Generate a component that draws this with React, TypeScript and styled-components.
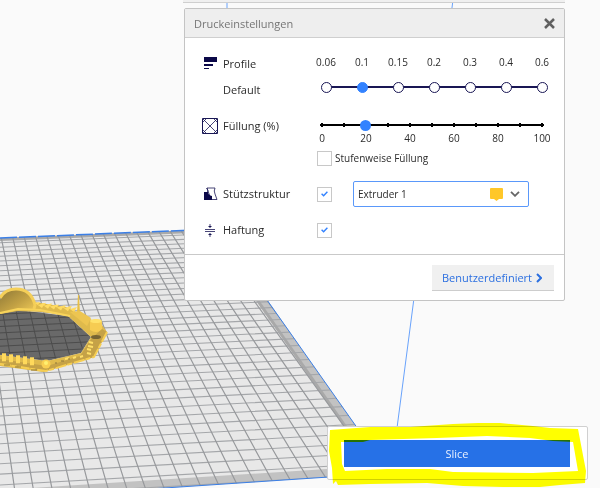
import React, { useState } from "react";
import styled, { createGlobalStyle } from "styled-components";

const GlobalStyle = createGlobalStyle`
  * { box-sizing: border-box; }
  body { margin: 0; background: #fafafa; }
  body, button, input, select {
    font-family: "Open Sans", "Noto Sans", sans-serif;
    font-size: 11px;
  }
`;

const ink = "#191654";
const blue = "#3282ff";

const Page = styled.main`
  position: relative;
  display: flex;
  flex-direction: column;
  align-items: flex-end;
  min-height: 100vh;
  overflow: hidden;
  color: #2b2b2b;
`;

const Backdrop = styled.svg`
  position: absolute;
  inset: 0;
  width: 100%;
  height: 100%;
`;

const SetupBar = styled.div`
  position: relative;
  width: min(100%, 382px);
  height: 3px;
  margin: 0 35px 5px 0;
  background: #f0f0f0;
  border-bottom: 1px solid #cfcfcf;
`;

const Panel = styled.section`
  position: relative;
  width: min(100%, 381px);
  margin-right: 35px;
  background: #fff;
  border: 1px solid #c4c4c4;
  border-radius: 2px;
`;

const PanelHeader = styled.header`
  display: flex;
  align-items: center;
  justify-content: space-between;
  height: 29px;
  padding: 0 9px;
  background: #eee;
  border-bottom: 1px solid #cfcfcf;
`;

const PanelTitle = styled.h1`
  margin: 0;
  font-size: 11px;
  font-weight: 400;
  color: #757575;
`;

const IconButton = styled.button`
  display: flex;
  padding: 0;
  border: 0;
  background: none;
  cursor: pointer;
`;

const PanelBody = styled.div`
  display: flex;
  flex-direction: column;
  gap: 10px;
  padding: 13px 12px 11px 17px;
`;

const Row = styled.div`
  display: grid;
  grid-template-columns: 21px 93px 1fr;
  align-items: start;
`;

const IconCell = styled.span`
  display: flex;
  align-items: center;
  height: 26px;
`;

const RowLabel = styled.div`
  line-height: 26px;
`;

const Stops = styled.div`
  position: relative;
  display: flex;
  justify-content: space-between;
  width: 236px;
  padding-top: 5px;
  &::before {
    content: "";
    position: absolute;
    left: 10px;
    right: 10px;
    bottom: 5px;
    height: 2px;
    background: ${ink};
  }
`;

const Stop = styled.label`
  position: relative;
  display: flex;
  flex-direction: column;
  align-items: center;
  gap: 14px;
  width: 20px;
  font-size: 10px;
  line-height: 12px;
`;

const StopRadio = styled.input`
  appearance: none;
  width: 11px;
  height: 11px;
  margin: 0;
  border: 1px solid ${ink};
  border-radius: 50%;
  background: #fff;
  &:checked {
    border-color: ${blue};
    background: ${blue};
  }
`;

const Infill = styled.div`
  display: flex;
  flex-direction: column;
  width: 232px;
  padding: 5px 0;
`;

const Range = styled.input`
  appearance: none;
  width: 100%;
  height: 14px;
  margin: 0;
  background: none;
  &::-webkit-slider-runnable-track {
    height: 14px;
    background:
      radial-gradient(circle, #000 2px, transparent 2px) -5px 0 / 22px 14px,
      linear-gradient(#000, #000) center / 220px 2px no-repeat;
  }
  &::-webkit-slider-thumb {
    appearance: none;
    width: 11px;
    height: 11px;
    margin-top: 2px;
    border-radius: 50%;
    background: ${blue};
  }
`;

const Scale = styled.div`
  display: flex;
  justify-content: space-between;
  margin: 0 -6px 7px;
  font-size: 10px;
  line-height: 12px;
  span {
    width: 24px;
    text-align: center;
  }
`;

const CheckLabel = styled.label`
  display: flex;
  align-items: center;
  gap: 3px;
  font-size: 10px;
  line-height: 15px;
`;

const CheckFrame = styled.span`
  display: grid;
  flex: none;
  width: 15px;
  height: 15px;
  margin-left: 1px;
  place-items: center;
  > * {
    grid-area: 1 / 1;
  }
  svg {
    pointer-events: none;
    visibility: hidden;
  }
  input:checked + svg {
    visibility: visible;
  }
`;

const CheckInput = styled.input`
  appearance: none;
  width: 15px;
  height: 15px;
  margin: 0;
  border: 1px solid #c8c8c8;
  background: #fff;
`;

const Controls = styled.div`
  display: flex;
  align-items: center;
  gap: 21px;
  height: 26px;
`;

const SelectFrame = styled.div`
  display: grid;
  width: 176px;
  align-items: center;
  > * {
    grid-area: 1 / 1;
  }
`;

const ExtruderSelect = styled.select`
  appearance: none;
  width: 100%;
  height: 26px;
  padding: 0 48px 0 4px;
  border: 1px solid #5a98fa;
  border-radius: 2px;
  background: #fff;
  color: #2b2b2b;
  font-size: 10px;
`;

const SelectIcons = styled.span`
  display: flex;
  align-items: center;
  gap: 7px;
  justify-self: end;
  margin-right: 9px;
  pointer-events: none;
`;

const PanelFooter = styled.footer`
  display: flex;
  justify-content: flex-end;
  padding: 10px 10px 9px;
  border-top: 1px solid #c9c9c9;
`;

const CustomButton = styled.button`
  display: flex;
  align-items: center;
  justify-content: space-between;
  min-width: 122px;
  height: 26px;
  padding: 0 12px 0 10px;
  border: 0;
  border-bottom: 1px solid #cdcdcd;
  background: #f0f0f0;
  color: #2b6fe0;
`;

const ActionCard = styled.section`
  position: relative;
  width: min(100%, 261px);
  margin: auto 12px 8px 0;
  padding: 13px 17px 12px 16px;
  background: #fff;
  border: 1px solid #d0d0d0;
  border-radius: 2px;
`;

const SliceButton = styled.button`
  display: block;
  width: 100%;
  height: 27px;
  padding: 0;
  border: 0;
  background: #2671e7;
  color: #e8f0ff;
`;

const Marker = styled.svg`
  position: absolute;
  left: -1px;
  top: -5px;
  width: 261px;
  height: 66px;
  mix-blend-mode: multiply;
  pointer-events: none;
`;

const columnPaths = Array.from({ length: 34 }, (_, i) => {
  const k = i - 4;
  const at = (y: number) => -80 + ((92 + 15.2 * k) * (y + 165)) / 531;
  return `M${at(225).toFixed(1)} 225L${at(500).toFixed(1)} 500`;
}).join("");

const rowPaths = Array.from({ length: 45 }, (_, i) => {
  const y = 1 / (0.0015385 + (i - 4) * 0.0000261) - 165;
  const slope = 0.042 + (y - 234) * 0.00006;
  return `M0 ${y.toFixed(1)}L420 ${(y - slope * 420).toFixed(1)}`;
}).join("");

const studs = [2, 9, 16, 23, 30];
const teeth = [38, 44, 50, 57, 64, 70];

function Scene() {
  return (
    <Backdrop viewBox="0 0 600 488" preserveAspectRatio="xMinYMin slice" aria-hidden="true">
      <defs>
        <clipPath id="plate">
          <path d="M0 238L217 229L389 473L0 499Z" />
        </clipPath>
        <clipPath id="opening">
          <path d="M0 314L18 311L68 316L90 337L80 352L47 360L0 354Z" />
        </clipPath>
        <linearGradient id="dome" x1="0" y1="0" x2="1" y2="1">
          <stop offset="0" stopColor="#8d7837" />
          <stop offset=".55" stopColor="#c2a144" />
          <stop offset="1" stopColor="#f2cc58" />
        </linearGradient>
      </defs>
      <g clipPath="url(#plate)">
        <path d="M0 225H420V500H0Z" fill="#c2c2c2" />
        <path d="M0 240L209 231L373 466L0 490Z" fill="#e8e8e8" />
        <path d="M0 239.500L217 230.500" stroke="#aaa" strokeWidth="3" />
        <path d="M209 231L373 466" stroke="#a9a9a9" strokeWidth="3" />
        <path d={rowPaths} stroke="#a5a7aa" strokeWidth="1.100" />
        <path d={columnPaths} stroke="#97999c" strokeWidth="1.200" />
      </g>
      <g fill="none" stroke="#3b7fe6">
        <path d="M0 238L217 229" strokeWidth="1.500" strokeDasharray="17 2" />
        <path d="M217 229L389 473L0 499" />
        <path d="M453 0L397 428M227 0V10" stroke="#68a2fb" />
      </g>
      <path d="M0 314L18 310L68 316L91 337L81 353L47 361L0 355Z" fill="#696969" />
      <g clipPath="url(#opening)" stroke="#4c4c4c">
        <path d={rowPaths} />
        <path d={columnPaths} />
      </g>
      <path d="M0 302H34L66 307L76 312L88 318L102 325L107 332L94 357L43 372L0 366Z M0 314V355L47 361L81 353L91 337L68 316L42 312L18 311Z" fill="#dfba4c" fillRule="evenodd" />
      <path d="M0 300Q4 289 16 289Q31 290 35 305L34 310L18 310L0 313Z" fill="url(#dome)" />
      <path d="M0 298Q5 289 16 289Q31 289 35 305L34 309" fill="none" stroke="#f5cf58" strokeWidth="3" />
      <path d="M0 313L18 309L40 310L70 316" fill="none" stroke="#f8d45b" strokeWidth="2" />
      {teeth.map((x) => (
        <path key={x} d={`M${x - 3} ${303 + (x - 38) / 8}l5 -1l-2 3l7 -2l-3 5z`} fill="#ffdb62" />
      ))}
      <path d="M78 295L77 314L80 314L79 295Z" fill="#e8bf45" />
      <path d="M70 312L80 311L91 318L87 326Z" fill="#edc551" />
      <path d="M90 322Q96 316 102 322V330Q96 334 90 330Z" fill="#f6cc52" />
      <ellipse cx="96" cy="321" rx="6" ry="2" fill="#ffe26b" />
      <path d="M102 329L107 332L94 357L46 371L0 363V359L47 366L80 356L92 338Z" fill="#c5a247" />
      <path d="M107 332L94 357L46 371L0 364" fill="none" stroke="#f6ce52" strokeWidth="2" strokeDasharray="11 2 5 1" />
      <ellipse cx="96" cy="337" rx="5" ry="2" fill="#766433" />
      <path d="M89 342l4 1m-5 3l5 1m-6 2l4 1m-4 3l4 1M65 359l4-1m4 0l3-1m4 0l3-1" stroke="#ffe06a" strokeWidth="2" />
      <path d="M55 363h2m4-2h3m4-2h2M4 365h6m5 2h6m10 3h6" stroke="#8d773b" />
      {studs.map((x) => (
        <path key={x} d={`M${x} ${353 + x / 7}h4v8h-4z`} fill="#ffd95b" />
      ))}
      <circle cx="46" cy="364" r="4.500" fill="#f9d052" />
      <circle cx="46" cy="363" r="2" fill="#fff070" />
    </Backdrop>
  );
}

const ProfileIcon = () => (
  <svg width="16" height="16" viewBox="0 0 16 16" fill="#0b0848" aria-hidden="true">
    <path d="M2 1h13v5H2zM2 8h9v2H2zM2 12h5v1H2z" />
  </svg>
);

const InfillIcon = () => (
  <svg width="16" height="16" viewBox="0 0 16 16" fill="none" stroke={ink} aria-hidden="true">
    <path d="M.5 .5h15v15H.5z" />
    <path d="M1 1l14 14M15 1L1 15M4 1L1 4M12 1l3 3M1 12l3 3M15 12l-3 3" strokeWidth=".8" />
  </svg>
);

const SupportIcon = () => (
  <svg width="16" height="16" viewBox="0 0 16 16" aria-hidden="true">
    <path d="M5 2h8q-1.500 3 0 6l2 5.500H9z" fill="#fff" stroke={ink} strokeWidth=".8" />
    <path d="M4.500 2q2 2 1 4.500" fill="none" stroke={ink} strokeWidth=".8" />
    <path d="M2 6h4q0 3 4 4v4H2z" fill="#0b0848" />
  </svg>
);

const AdhesionIcon = () => (
  <svg width="16" height="16" viewBox="0 0 16 16" fill="none" stroke={ink} aria-hidden="true">
    <path d="M3 7.500h10M3 9.500h10M8 2v3M8 12v3" strokeWidth=".8" />
    <path d="M6 4h4L8 6zM6 13h4L8 11z" fill={ink} stroke="none" />
  </svg>
);

const CheckMark = () => (
  <svg width="7" height="6" viewBox="0 0 7 6" fill="none" stroke={blue} strokeWidth="1.400" aria-hidden="true">
    <path d="M.6 2.800l2 2L6.400 .8" />
  </svg>
);

const profiles = ["0.06", "0.1", "0.15", "0.2", "0.3", "0.4", "0.6"];

export default function App() {
  const [profile, setProfile] = useState("0.1");
  const [infill, setInfill] = useState(20);

  return (
    <Page>
      <GlobalStyle />
      <Scene />
      <SetupBar />
      <Panel aria-labelledby="settings-title">
        <PanelHeader>
          <PanelTitle id="settings-title">Druckeinstellungen</PanelTitle>
          <IconButton type="button" aria-label="Schließen">
            <svg width="11" height="11" viewBox="0 0 11 11" stroke="#606060" strokeWidth="2.500" aria-hidden="true">
              <path d="M1 1l9 9M10 1l-9 9" />
            </svg>
          </IconButton>
        </PanelHeader>
        <PanelBody>
          <Row>
            <IconCell><ProfileIcon /></IconCell>
            <RowLabel>
              <div id="profile-label">Profile</div>
              <div>Default</div>
            </RowLabel>
            <Stops role="radiogroup" aria-labelledby="profile-label">
              {profiles.map((value) => (
                <Stop key={value}>
                  {value}
                  <StopRadio
                    type="radio"
                    name="profile"
                    value={value}
                    checked={profile === value}
                    onChange={() => setProfile(value)}
                  />
                </Stop>
              ))}
            </Stops>
          </Row>
          <Row>
            <IconCell><InfillIcon /></IconCell>
            <RowLabel as="label" htmlFor="infill">Füllung (%)</RowLabel>
            <Infill>
              <Range
                id="infill"
                type="range"
                min="0"
                max="100"
                value={infill}
                onChange={(event) => setInfill(Number(event.target.value))}
              />
              <Scale>
                {[0, 20, 40, 60, 80, 100].map((value) => <span key={value}>{value}</span>)}
              </Scale>
              <CheckLabel>
                <CheckFrame><CheckInput type="checkbox" /><CheckMark /></CheckFrame>
                Stufenweise Füllung
              </CheckLabel>
            </Infill>
          </Row>
          <Row>
            <IconCell><SupportIcon /></IconCell>
            <RowLabel as="label" htmlFor="support">Stützstruktur</RowLabel>
            <Controls>
              <CheckFrame><CheckInput id="support" type="checkbox" defaultChecked /><CheckMark /></CheckFrame>
              <SelectFrame>
                <ExtruderSelect aria-label="Extruder">
                  <option>Extruder 1</option>
                </ExtruderSelect>
                <SelectIcons>
                  <svg width="13" height="13" viewBox="0 0 13 13" fill="#ffc729" aria-hidden="true">
                    <path d="M1 0h11q1 0 1 1v9q0 1-1 1H9L6.500 13 4 11H1q-1 0-1-1V1q0-1 1-1z" />
                  </svg>
                  <svg width="10" height="6" viewBox="0 0 10 6" fill="none" stroke="#666" strokeWidth="1.800" aria-hidden="true">
                    <path d="M1 .8l4 4 4-4" />
                  </svg>
                </SelectIcons>
              </SelectFrame>
            </Controls>
          </Row>
          <Row>
            <IconCell><AdhesionIcon /></IconCell>
            <RowLabel as="label" htmlFor="adhesion">Haftung</RowLabel>
            <Controls>
              <CheckFrame><CheckInput id="adhesion" type="checkbox" defaultChecked /><CheckMark /></CheckFrame>
            </Controls>
          </Row>
        </PanelBody>
        <PanelFooter>
          <CustomButton type="button">
            Benutzerdefiniert
            <svg width="6" height="10" viewBox="0 0 6 10" fill="none" stroke="#2b6fe0" strokeWidth="2" aria-hidden="true">
              <path d="M1 1l4 4-4 4" />
            </svg>
          </CustomButton>
        </PanelFooter>
      </Panel>
      <ActionCard>
        <SliceButton type="button">Slice</SliceButton>
        <Marker viewBox="327 421 261 66" aria-hidden="true">
          <path
            fill="#ff0"
            fillRule="evenodd"
            d="M330 429L370 426L410 426L453 423L478 422L500 422L533 425L550 427L578 428L582 449L586 470L585 482L560 484L540 486H503L463 485L427 482L370 483L338 484L336 480L333 483L332 467L329 450Z M341 441H363L370 439L437 437L487 435L530 437L553 440L573 441L578 470L533 472L453 471L430 468H387L345 470L342 463Z"
          />
        </Marker>
      </ActionCard>
    </Page>
  );
}
